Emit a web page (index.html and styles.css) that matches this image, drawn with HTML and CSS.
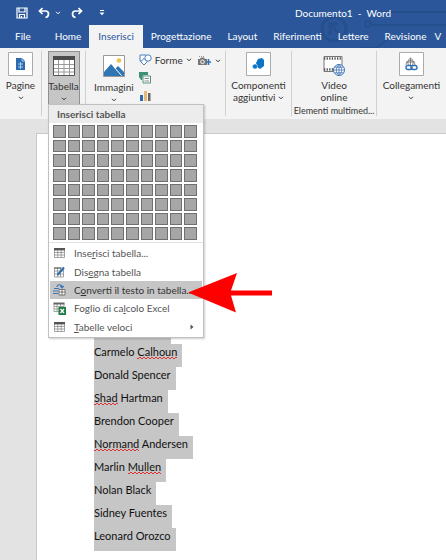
FILE: index.html
```html
<!DOCTYPE html>
<html lang="it">
<head>
<meta charset="utf-8">
<title>Documento1 - Word</title>
<link rel="stylesheet" href="styles.css">
</head>
<body>
<svg class="defs" width="0" height="0" aria-hidden="true">
  <symbol id="chev" viewBox="0 0 6 4"><path d="M1 .8 3 2.8 5 .8" fill="none" stroke="currentColor"/></symbol>
  <symbol id="grid" viewBox="0 0 11 10"><path d="M.5 1.5h10v8H.5zM.5 4.5h10M.5 7h10M3.8 2v7M7.2 2v7" fill="#fff" stroke="#8b8b8b" stroke-width=".8"/><path d="M0 0h11v2.4H0z" fill="#555"/></symbol>
</svg>
<header class="top">
  <svg class="circuit" viewBox="0 0 146 48" aria-hidden="true">
    <g fill="none" stroke="#264f8e" stroke-width="2"><circle cx="34" cy="29" r="12" stroke-width="3"/><path d="M30 35V24h9M31 25l9 10" stroke-width="3"/><circle cx="68" cy="24" r="3"/><path d="M71 25h75M76 12h70M60 48h16l12-9" /></g>
  </svg>
  <div class="titlebar">
    <div class="quick">
      <button aria-label="Salva"><svg width="12" height="12" viewBox="0 0 12 12"><path d="M1 1h10v10H1zM3 1v4h6V1M3.500 11V7.500h5V11M5.500 9v2" fill="none" stroke="#fff" stroke-width="1.200"/></svg></button>
      <button class="undo" aria-label="Annulla"><svg width="12" height="12" viewBox="0 0 12 12"><path d="M4.500 1 1.500 4l3 3M2 4h5.500c4 0 4 5.500 0 6.500" fill="none" stroke="#fff" stroke-width="1.700"/></svg><svg width="6" height="4"><use href="#chev"/></svg></button>
      <button aria-label="Ripeti"><svg width="12" height="12" viewBox="0 0 12 12"><path d="m7.500 1 3 3-3 3M10 4H4.500c-4 0-4 5.500 0 6.500" fill="none" stroke="#fff" stroke-width="1.700"/></svg></button>
      <button class="custom" aria-label="Personalizza"><svg width="6" height="6" viewBox="0 0 6 6"><path d="M1 0h4v1H1zM.5 2.500h5L3 5.200z" fill="#fff"/></svg></button>
    </div>
    <h1>Documento1&nbsp; -&nbsp; Word</h1>
  </div>
  <nav class="tabs">
    <a class="file" href="#">File</a><a href="#">Home</a><a class="active" href="#">Inserisci</a><a href="#">Progettazione</a><a href="#">Layout</a><a href="#">Riferimenti</a><a href="#">Lettere</a><a href="#">Revisione</a><a href="#">V</a>
  </nav>
</header>
<section class="ribbon">
  <div class="group">
    <button class="big"><svg class="framed" width="25" height="24" viewBox="0 0 25 24"><path d="M.5.5h24v23H.5z" fill="#fff" stroke="#ababab"/><path d="M8 6h6l3 3v9H8z" fill="#2b6cb0"/><path d="M14 6v3h3M10 12h5M10 15h5M12.500 10v7" fill="none" stroke="#b8d5f0" stroke-width=".9"/></svg><span>Pagine</span><svg width="6" height="4"><use href="#chev"/></svg></button>
  </div>
  <div class="group">
    <button class="big pressed"><svg width="22" height="20" viewBox="0 0 22 20"><path d="M.5.5h21v19H.5z" fill="#fff" stroke="#555"/><path d="M0 0h22v4H0z" fill="#4c4c4c"/><path d="M1 8.500h20M1 12.500h20M1 16h20M5.500 4v15M11 4v15M16.500 4v15" stroke="#999"/></svg><span>Tabella</span><svg width="6" height="4"><use href="#chev"/></svg></button>
    <div class="menu">
      <h2>Inserisci tabella</h2>
      <div class="cells">
        <i></i><i></i><i></i><i></i><i></i><i></i><i></i><i></i><i></i><i></i>
        <i></i><i></i><i></i><i></i><i></i><i></i><i></i><i></i><i></i><i></i>
        <i></i><i></i><i></i><i></i><i></i><i></i><i></i><i></i><i></i><i></i>
        <i></i><i></i><i></i><i></i><i></i><i></i><i></i><i></i><i></i><i></i>
        <i></i><i></i><i></i><i></i><i></i><i></i><i></i><i></i><i></i><i></i>
        <i></i><i></i><i></i><i></i><i></i><i></i><i></i><i></i><i></i><i></i>
        <i></i><i></i><i></i><i></i><i></i><i></i><i></i><i></i><i></i><i></i>
        <i></i><i></i><i></i><i></i><i></i><i></i><i></i><i></i><i></i><i></i>
      </div>
      <div class="items">
        <button><svg width="12" height="12" viewBox="0 -1 11 12"><use href="#grid" width="11" height="10"/></svg><span>Inse<u>r</u>isci tabella...</span></button>
        <button><svg width="12" height="12" viewBox="0 0 12 12"><path d="M1 2h9v9H1zM1 5h9M1 8h9M4 2v9M7 2v9" fill="#fff" stroke="#8b8b8b" stroke-width=".8"/><path d="M.5 1.500h7v1h-7z" fill="#555"/><path d="M4 9 10.500 1.500" stroke="#2b6cb0" stroke-width="2"/></svg><span>Dis<u>e</u>gna tabella</span></button>
        <button class="hover"><svg width="13" height="13" viewBox="0 0 13 13"><path d="M1 5.500h5M0 8h5M0 10.500h5M4 4c0-3 5-3 5 0M7.300 3 9 4.800 10.700 3" fill="none" stroke="#3d78b8" stroke-width="1.200"/><path d="M6 6.500h6v5.500H6zM6 9h6M9 7v5" fill="#fff" stroke="#666" stroke-width=".9"/></svg><span>C<u>o</u>nverti il testo in tabella...</span></button>
        <button><svg width="13" height="13" viewBox="0 0 13 13"><path d="M1 1.500h10v8H1zM1 4.500h10M1 7h10M4 2v7M7.500 2v7" fill="#fff" stroke="#8b8b8b" stroke-width=".8"/><path d="M.5.5h11v2H.5z" fill="#666"/><path d="M5.500 5H13v8H5.500z" fill="#1e7b45"/><path d="m7.500 7 3.500 4M11 7l-3.500 4" stroke="#fff" stroke-width="1.200"/></svg><span>Foglio di ca<u>l</u>colo Excel</span></button>
        <button><svg width="12" height="12" viewBox="0 -1 11 12"><use href="#grid" width="11" height="10"/></svg><span><u>T</u>abelle veloci</span><svg class="more" width="4" height="6" viewBox="0 0 4 6"><path d="M.5.5 3.500 3 .5 5.500z" fill="#555"/></svg></button>
      </div>
      <svg class="arrow" width="86" height="40" viewBox="0 0 86 40" aria-hidden="true"><path d="M0 19.500 49 0 43 17.500h41v5H43l5 17z" fill="#f00"/></svg>
    </div>
  </div>
  <div class="group pictures">
    <button class="big"><svg width="22" height="22" viewBox="0 0 22 22"><path d="M.5.5h21v21H.5z" fill="#fff" stroke="#999"/><circle cx="16" cy="5.500" r="2.300" fill="#f0c054"/><path d="M1 21v-4l7-8 11 12z" fill="#2f75b5"/><path d="m12 14 3-3 6 6v4h-2z" fill="#2f75b5"/><path d="m10.500 11.500 8 9" stroke="#fff"/></svg><span>Immagini</span><svg width="6" height="4"><use href="#chev"/></svg></button>
    <div class="small">
      <button><svg width="13" height="12" viewBox="0 0 13 12"><path d="M1 1h6v6H1z" fill="#fff" stroke="#4a81bd"/><circle cx="9" cy="4" r="3.200" fill="#fff" stroke="#4a81bd"/><path d="m5 4.500 3.200 3.200L5 11 1.800 7.700z" fill="#fff" stroke="#4a81bd"/></svg><span>Forme</span><svg width="6" height="4"><use href="#chev"/></svg></button>
      <button aria-label="SmartArt"><svg width="13" height="12" viewBox="0 0 13 12"><path d="M0 0h9v3H4l-1 5H2L0 5z" fill="#3f8f75"/><path d="M4 4h7.500v7H4z" fill="#fff" stroke="#55967f"/><path d="M5.500 6.500h4.500M5.500 9h4.500" stroke="#888"/></svg></button>
      <button aria-label="Grafico"><svg width="13" height="12" viewBox="0 0 13 12"><path d="M1 5h3v6H1z" fill="#2f6ba8"/><path d="M5 1h3v10H5z" fill="#e9b877"/><path d="M9 3h2.500v8H9z" fill="#666"/></svg></button>
    </div>
    <button class="shot" aria-label="Schermata"><svg width="13" height="10" viewBox="0 0 13 10"><path d="M0 3h2l1-1.500h3L7 3h2v6H0z" fill="#777"/><circle cx="4.500" cy="5.800" r="1.800" fill="#777" stroke="#fff"/><path d="M10.500 3v6M8 6h5" stroke="#2f75b5" stroke-width="1.600"/><path d="M1 .5h5" stroke="#999" stroke-dasharray="1 1"/></svg><svg width="6" height="4"><use href="#chev"/></svg></button>
  </div>
  <div class="group">
    <button class="big"><svg class="framed" width="25" height="24" viewBox="0 0 25 24"><path d="M.5.5h24v23H.5z" fill="#fff" stroke="#ababab"/><path d="m12 7 4-1 2 2v6l-4 3-3-2-1-4z" fill="#0b74c7"/><circle cx="9" cy="14.500" r="2.500" fill="#0b74c7" stroke="#fff" stroke-width=".5"/></svg><span>Componenti</span><span>aggiuntivi <svg class="inline" width="6" height="4"><use href="#chev"/></svg></span></button>
  </div>
  <div class="group">
    <button class="big"><svg class="framed" width="24" height="24" viewBox="0 0 24 24"><path d="M2 4.500h18v15H2z" fill="#fff" stroke="#777"/><path d="M2 6.500h18M2 17.500h10" stroke="#555" stroke-width="2.500" stroke-dasharray="1.300 1.300"/><circle cx="17" cy="18" r="5.500" fill="#fff" stroke="#3f74b5"/><path d="M11.500 18h11M12.500 15.200h9M12.500 20.800h9M17 12.500v11M17 12.500c-3.500 3-3.500 8 0 11M17 12.500c3.500 3 3.500 8 0 11" fill="none" stroke="#3f74b5" stroke-width=".8"/></svg><span>Video</span><span>online</span></button>
    <p>Elementi multimed...</p>
  </div>
  <div class="group">
    <button class="big"><svg class="framed" width="25" height="24" viewBox="0 0 25 24"><path d="M.5.5h24v23H.5z" fill="#fff" stroke="#ababab"/><path d="M7 13a4.500 4.500 0 1 1 9 0M7 10h9M11.500 6v7M11.500 6c-3 2-3 5-2 7M11.500 6c3 2 3 5 2 7" fill="none" stroke="#777" stroke-width=".9"/><rect x="7" y="13.500" width="6" height="4" rx="2" fill="none" stroke="#2f6fb3" stroke-width="1.400"/><rect x="12" y="13.500" width="6" height="4" rx="2" fill="none" stroke="#2f6fb3" stroke-width="1.400"/></svg><span>Collegamenti</span><svg width="6" height="4"><use href="#chev"/></svg></button>
  </div>
</section>
<main class="workspace">
  <article class="page">
    <p class="covered"></p>
    <p>Carmelo <u>Calhoun</u></p>
    <p>Donald Spencer</p>
    <p><u>Shad</u> Hartman</p>
    <p>Brendon Cooper</p>
    <p><u>Normand</u> Andersen</p>
    <p>Marlin <u>Mullen</u></p>
    <p>Nolan Black</p>
    <p>Sidney Fuentes</p>
    <p>Leonard Orozco</p>
  </article>
</main>
</body>
</html>
```
FILE: styles.css
```css
* { box-sizing: border-box; }
body {
  margin: 0;
  min-height: 100vh;
  display: flex;
  flex-direction: column;
  overflow: hidden;
  background: #e3e3e3;
  font: 10px/12px Lato, "Noto Sans", sans-serif;
  color: #333;
}
.defs { position: absolute; }
button {
  margin: 0;
  padding: 0;
  border: 0;
  background: none;
  color: inherit;
  font: inherit;
}
h1, h2, p { margin: 0; font: inherit; }

.top { position: relative; background: #2b579a; color: #fff; }
.circuit { position: absolute; right: 0; top: 0; width: 146px; height: 48px; }
.titlebar {
  position: relative;
  display: flex;
  align-items: center;
  justify-content: space-between;
  height: 25px;
  padding: 0 55px 0 16px;
}
.quick { display: flex; align-items: center; gap: 10px; }
.quick button { display: flex; align-items: center; gap: 5px; }
.quick .custom { margin-left: 6px; }
.tabs { position: relative; display: flex; height: 23px; padding-left: 7px; overflow: hidden; }
.tabs a {
  flex: none;
  padding: 0 8px;
  color: #fff;
  line-height: 23px;
  text-decoration: none;
}
.tabs a:last-child { padding: 0; }
.tabs .file { margin-right: 8px; }
.tabs .active { padding: 0 9px; background: #f3f3f3; color: #2b579a; }

.ribbon {
  display: grid;
  grid-template-columns: 42fr 44fr 140fr 66fr 85fr 69fr;
  height: 71px;
  padding: 3px 0;
  background: #f3f3f3;
}
.group {
  position: relative;
  display: flex;
  flex-direction: column;
  align-items: center;
  min-width: 0;
  border-right: 1px solid #d0d0d0;
  white-space: nowrap;
}
.group:last-child { border-right: 0; }
.group p { margin-top: auto; font-size: 9px; line-height: 10px; }
.big {
  display: flex;
  flex-direction: column;
  align-items: center;
  height: 54px;
}
.big > svg:first-child { margin: 4px 0 4px; }
.big > .framed:first-child { margin: 1px 0 3px; }
.big > svg:last-child { margin-top: 5px; }
.big .inline { margin-bottom: 1px; }
.pressed {
  width: 32px;
  border: 1px solid #8f8f8f;
  background: #c6c6c6;
}
.pictures { flex-direction: row; align-items: flex-start; padding-left: 8px; }
.small { display: flex; flex-direction: column; gap: 6px; margin: 3px 6px 0 5px; }
.small button, .shot { display: flex; align-items: center; gap: 3px; height: 12px; }
.shot { gap: 4px; margin-top: 4px; }

.menu {
  position: absolute;
  z-index: 2;
  left: 6px;
  top: 53px;
  width: 156px;
  border: 1px solid #c0c0c0;
  background: #fff;
  box-shadow: 1px 1px 2px #0003;
  color: #555;
}
.menu h2 {
  padding-left: 8px;
  background: #ececec;
  font-weight: 700;
  line-height: 18px;
}
.cells {
  display: grid;
  grid-template: repeat(8, 1fr) / repeat(10, 1fr);
  gap: 2px;
  height: 119px;
  padding: 2px 6px 2px 4px;
}
.cells i { border: 1px solid #707070; background: #a6a6a6; }
.items {
  display: grid;
  grid-template-rows: repeat(5, 1fr);
  height: 95px;
  padding: 1px;
  border-top: 1px solid #e1e1e1;
}
.items button {
  display: flex;
  align-items: center;
  gap: 8px;
  padding-left: 3px;
  text-align: left;
  white-space: nowrap;
}
.items svg { flex: none; width: 13px; }
.items .hover { background: #c6c6c6; color: #333; }
.items .more { width: 4px; margin: 0 8px 0 auto; }
.arrow { position: absolute; left: 139px; top: 168px; }

.workspace { flex: 1; display: flex; padding: 14px 0 0 36px; }
.page {
  flex: 1;
  padding: 187px 0 8px 57px;
  border: 1px solid #c9c9c9;
  border-width: 1px 0 0 1px;
  background: #fff;
  color: #111;
  font: 11px/16px Lato, sans-serif;
}
.page p {
  width: fit-content;
  height: 23px;
  padding-right: 5px;
  background: #c6c6c6;
}
.page .covered { width: 77px; }
.page u {
  padding-bottom: 1px;
  background: repeating-conic-gradient(#d33 0 25%, transparent 0 50%) 0 100% / 4px 2px repeat-x;
  text-decoration: none;
}
```
